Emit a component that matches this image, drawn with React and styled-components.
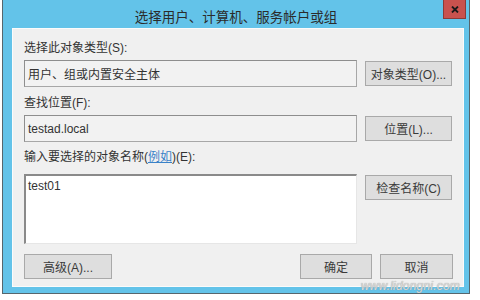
import React from 'react';
import styled, { createGlobalStyle } from 'styled-components';

const GlobalStyle = createGlobalStyle`
  body {
    margin: 0;
    background: #ffffff;
    font-family: "Liberation Sans", "Noto Sans CJK SC", sans-serif;
  }
`

const Frame = styled.div`
  position: relative;
  margin-left: 2px;
  width: 468px;
  height: 294px;
  box-sizing: border-box;
  border: 1px solid #56666d;
  border-top: none;
  background: #63c3e9;
  display: flex;
  flex-direction: column;
`

const TitleBar = styled.div`
  height: 28px;
  padding-top: 3px;
  box-sizing: border-box;
  display: flex;
  align-items: center;
  justify-content: center;
  font-size: 13.5px;
  color: #2b2b2b;
`

const CloseButton = styled.div`
  position: absolute;
  top: 0;
  right: 3px;
  width: 23px;
  height: 19px;
  box-sizing: border-box;
  background: #c9524e;
  border: 1px solid #8d3a37;
  border-top: none;
  display: flex;
  align-items: center;
  justify-content: center;
`

const Content = styled.div`
  margin: 0 5px 6px 9px;
  flex: 1;
  box-sizing: border-box;
  border: 1px solid #fbfbfb;
  background: #f0f0f0;
  padding: 11px 10px 7px 11px;
  display: flex;
  flex-direction: column;
`

const FieldLabel = styled.div`
  font-size: 12px;
  line-height: 16px;
  color: #333333;
  margin-bottom: ${(props) => props.$mb || 4}px;
`

const Link = styled.span`
  color: #3a82c8;
  text-decoration: underline;
`

const Row = styled.div`
  display: grid;
  grid-template-columns: 333px 87px;
  column-gap: 8px;
  align-items: ${(props) => (props.$top ? 'start' : 'center')};
  margin-bottom: ${(props) => props.$mb || 0}px;
`

const ReadBox = styled.div`
  height: 27px;
  box-sizing: border-box;
  border: 1px solid #a7a7a7;
  border-top-color: #8e8e8e;
  border-left-color: #8e8e8e;
  background: #f2f2f2;
  padding-left: 3px;
  display: flex;
  align-items: center;
  font-size: 12px;
  color: #333333;
`

const NameArea = styled.div`
  height: 70px;
  box-sizing: border-box;
  border: 1px solid #e6e6e6;
  border-top: 2px solid #8a8a8a;
  border-left: 2px solid #8a8a8a;
  background: #ffffff;
  padding: 3px 2px;
  font-size: 12px;
  line-height: 14px;
  color: #333333;
`

const Button = styled.div`
  width: ${(props) => props.$w || 87}px;
  height: 25px;
  margin-top: ${(props) => props.$mt || 0}px;
  margin-left: ${(props) => (props.$push ? 'auto' : '0')};
  box-sizing: border-box;
  border: 1px solid #a9a9a9;
  background: #dedede;
  display: flex;
  align-items: center;
  justify-content: center;
  font-size: 12px;
  color: #3a3a3a;
`

const Footer = styled.div`
  display: flex;
  gap: 8px;
  margin-top: 10px;
`

const Watermark = styled.div`
  position: absolute;
  right: 9px;
  bottom: 0px;
  font-size: 12px;
  font-style: italic;
  color: #d9d9d9;
  text-shadow: 0 0 1px #8f8f8f;
  letter-spacing: 0.2px;
`

const App = () => {
  return (
    <>
      <GlobalStyle />
      <Frame>
        <TitleBar>选择用户、计算机、服务帐户或组</TitleBar>
        <CloseButton>
          <svg width="8" height="7" viewBox="0 0 8 7">
            <path d="M1 0.5 L7 6.5 M7 0.5 L1 6.5" stroke="#1a1a1a" strokeWidth="1.8" />
          </svg>
        </CloseButton>
        <Content>
          <FieldLabel>选择此对象类型(S):</FieldLabel>
          <Row $mb={8}>
            <ReadBox>用户、组或内置安全主体</ReadBox>
            <Button>对象类型(O)...</Button>
          </Row>
          <FieldLabel>查找位置(F):</FieldLabel>
          <Row $mb={7}>
            <ReadBox>testad.local</ReadBox>
            <Button>位置(L)...</Button>
          </Row>
          <FieldLabel $mb={9}>
            输入要选择的对象名称(<Link>例如</Link>)(E):
          </FieldLabel>
          <Row $top>
            <NameArea>test01</NameArea>
            <Button $mt={1}>检查名称(C)</Button>
          </Row>
          <Footer>
            <Button $w={88}>高级(A)...</Button>
            <Button $w={72} $push>确定</Button>
            <Button $w={73}>取消</Button>
          </Footer>
        </Content>
        <Watermark>www.lidongni.com</Watermark>
      </Frame>
    </>
  );
};

export default App;
